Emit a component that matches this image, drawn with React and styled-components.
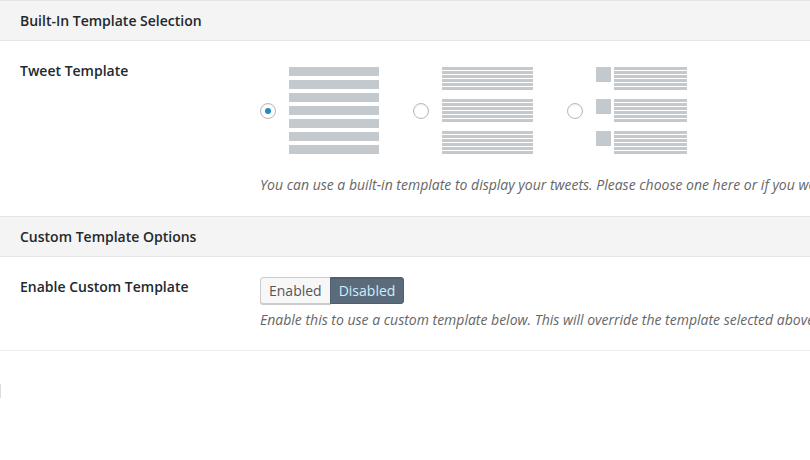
import React, { useState } from "react";
import styled, { createGlobalStyle } from "styled-components";

const GlobalStyle = createGlobalStyle`
  html, body {
    margin: 0;
    padding: 0;
    background: #fff;
    overflow: hidden;
  }
  body {
    font-family: "Open Sans", "Liberation Sans", sans-serif;
    font-size: 14px;
    color: #23282d;
  }
`;

const Page = styled.div`
  width: 810px;
  height: 460px;
  overflow: hidden;
  background: #fff;
`;

const SectionHeader = styled.div`
  box-sizing: border-box;
  height: 41px;
  display: flex;
  align-items: center;
  padding: 0 20px;
  background: #f4f4f4;
  border-top: 1px solid #e5e5e5;
  border-bottom: 1px solid #e5e5e5;
  font-weight: 600;
  font-size: 14px;
  line-height: 20px;
  white-space: nowrap;
`;

const Row = styled.div`
  display: flex;
  padding: 20px 0 ${(p) => p.$bottom || 20}px 20px;
  border-bottom: ${(p) => (p.$last ? "1px solid #ececec" : "none")};
`;

const Label = styled.div`
  flex: 0 0 240px;
  font-weight: 600;
  line-height: 20px;
  white-space: nowrap;
`;

const Field = styled.div`
  display: flex;
  flex-direction: column;
  min-width: 0;
`;

const Description = styled.p`
  margin: ${(p) => p.$top || 0}px 0 0;
  font-style: italic;
  color: #666;
  line-height: 20px;
  white-space: nowrap;
`;

const Options = styled.div`
  display: flex;
  align-items: center;
  gap: 34px;
  padding-top: 6px;
`;

const Option = styled.label`
  display: flex;
  align-items: center;
  gap: 13px;
  cursor: pointer;
`;

const Radio = styled.span`
  box-sizing: border-box;
  width: 16px;
  height: 16px;
  border-radius: 50%;
  border: 1px solid #b4b9be;
  background: #fff;
  box-shadow: inset 0 1px 2px rgba(0, 0, 0, 0.07);
  display: flex;
  align-items: center;
  justify-content: center;

  &::after {
    content: "";
    width: 6px;
    height: 6px;
    border-radius: 50%;
    background: ${(p) => (p.$checked ? "#1e8cbe" : "transparent")};
  }
`;

const Preview = styled.div`
  display: flex;
  flex-direction: column;
  gap: ${(p) => p.$gap}px;
  width: ${(p) => p.$width || 90}px;
`;

const Bar = styled.div`
  height: ${(p) => p.$h}px;
  background: #c3c9cd;
`;

const Group = styled.div`
  display: flex;
  gap: 3px;
`;

const Thumb = styled.div`
  flex: 0 0 15px;
  height: 15px;
  background: #c3c9cd;
`;

const Lines = styled.div`
  flex: 1;
  display: flex;
  flex-direction: column;
  gap: 1px;
`;

const Toggle = styled.div`
  display: flex;
  align-self: flex-start;
`;

const ToggleButton = styled.button`
  box-sizing: border-box;
  height: 27px;
  padding: 0 8px;
  font-family: "Open Sans", "Liberation Sans", sans-serif;
  font-size: 14px;
  line-height: 25px;
  cursor: pointer;
  border: 1px solid ${(p) => (p.$active ? "#4f5f6d" : "#ccc")};
  background: ${(p) => (p.$active ? "#5b6b7b" : "#f7f7f7")};
  color: ${(p) => (p.$active ? "#cdeefc" : "#555")};
  box-shadow: ${(p) =>
    p.$active ? "inset 0 1px 0 rgba(0,0,0,0.1)" : "0 1px 0 #ccc"};
  border-radius: ${(p) => (p.$first ? "3px 0 0 3px" : "0 3px 3px 0")};
  margin-left: ${(p) => (p.$first ? 0 : -1)}px;
`;

const EdgeMark = styled.div`
  width: 1px;
  height: 14px;
  margin-top: 33px;
  background: #dcdcdc;
`;

function StackPreview() {
  return (
    <Preview $gap={4}>
      {Array.from({ length: 7 }).map((_, i) => (
        <Bar key={i} $h={9} />
      ))}
    </Preview>
  );
}

function LinesBlock() {
  return (
    <Lines>
      {Array.from({ length: 6 }).map((_, i) => (
        <Bar key={i} $h={3} />
      ))}
    </Lines>
  );
}

function GroupedPreview() {
  return (
    <Preview $gap={9} $width={91}>
      {[0, 1, 2].map((g) => (
        <LinesBlock key={g} />
      ))}
    </Preview>
  );
}

function ThumbPreview() {
  return (
    <Preview $gap={9} $width={91}>
      {[0, 1, 2].map((g) => (
        <Group key={g}>
          <Thumb />
          <LinesBlock />
        </Group>
      ))}
    </Preview>
  );
}

const templates = [
  { id: "stack", Comp: StackPreview },
  { id: "grouped", Comp: GroupedPreview },
  { id: "thumbs", Comp: ThumbPreview },
];

export default function App() {
  const [template, setTemplate] = useState("stack");
  const [custom, setCustom] = useState(false);

  return (
    <Page>
      <GlobalStyle />
      <SectionHeader>Built-In Template Selection</SectionHeader>
      <Row $bottom={21}>
        <Label>Tweet Template</Label>
        <Field>
          <Options>
            {templates.map(({ id, Comp }) => (
              <Option key={id} onClick={() => setTemplate(id)}>
                <Radio $checked={template === id} />
                <Comp />
              </Option>
            ))}
          </Options>
          <Description $top={21}>
            You can use a built-in template to display your tweets. Please
            choose one here or if you would like to use your own, enable the
            custom template below.
          </Description>
        </Field>
      </Row>
      <SectionHeader>Custom Template Options</SectionHeader>
      <Row $last>
        <Label>Enable Custom Template</Label>
        <Field>
          <Toggle>
            <ToggleButton $first $active={custom} onClick={() => setCustom(true)}>
              Enabled
            </ToggleButton>
            <ToggleButton $active={!custom} onClick={() => setCustom(false)}>
              Disabled
            </ToggleButton>
          </Toggle>
          <Description $top={6}>
            Enable this to use a custom template below. This will override the
            template selected above.
          </Description>
        </Field>
      </Row>
      <EdgeMark />
    </Page>
  );
}
